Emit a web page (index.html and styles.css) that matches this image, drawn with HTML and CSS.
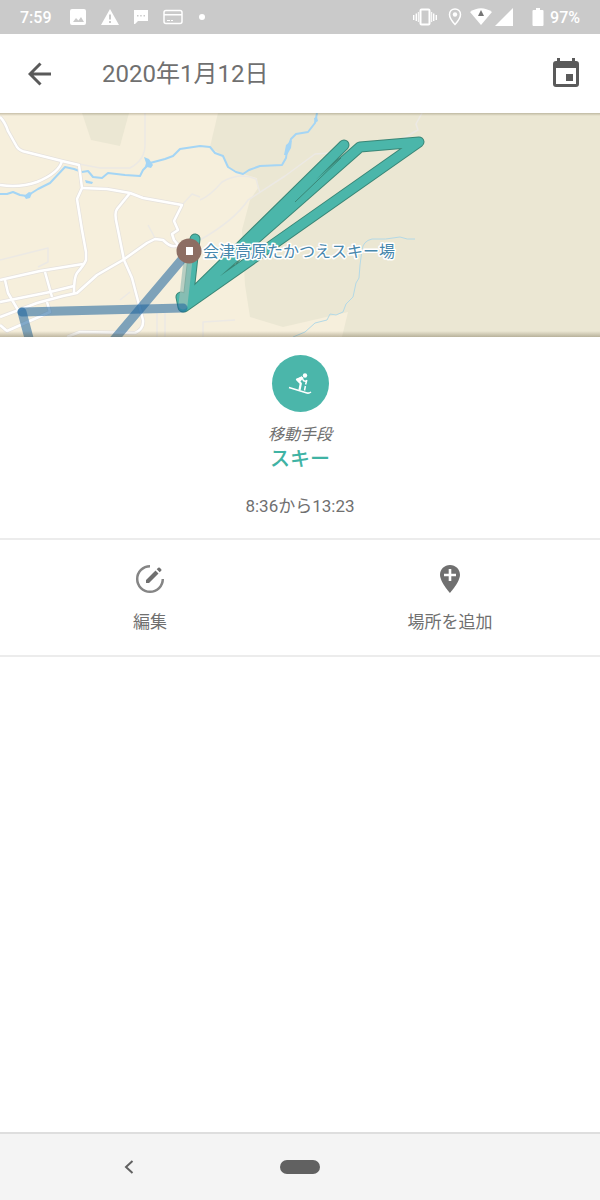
FILE: index.html
```html
<!DOCTYPE html>
<html lang="ja">

<head>
    <meta charset="UTF-8">
    <meta name="viewport" content="width=device-width, initial-scale=1.0">
    <title>2020年1月12日</title>
    <link rel="stylesheet" href="styles.css">
</head>

<body>
    <!-- Status Bar -->
    <div class="status-bar">
        <span class="clock">7:59</span>
        <div class="status-icons">
            <svg width="16" height="16" viewBox="0 0 16 16">
                <path fill-rule="evenodd" d="M2 0h12a2 2 0 0 1 2 2v12a2 2 0 0 1-2 2H2a2 2 0 0 1-2-2V2a2 2 0 0 1 2-2zM3 13h11l-3-5-2.500 3.500L6 9z" />
            </svg>
            <svg width="18" height="16" viewBox="0 0 18 16">
                <path fill-rule="evenodd" d="M9 0l9 16H0zM8 5.500v5h2v-5zM8 12v2h2v-2z" />
            </svg>
            <svg width="14" height="14" viewBox="0 0 14 14">
                <path fill-rule="evenodd" d="M0 0h14v11H4l-3 3H0zM3 5v1.500h1.500V5zM6.200 5v1.500h1.500V5zM9.500 5v1.500H11V5z" />
            </svg>
            <svg width="20" height="16" viewBox="0 0 20 16">
                <rect x="1" y="1.500" width="18" height="13" rx="2" class="line" />
                <path d="M1 5h18v1.500H1zM4 11h3v1H4zM8 11h2v1H8z" />
            </svg>
            <svg width="8" height="8" viewBox="0 0 8 8">
                <circle cx="4" cy="4" r="3" />
            </svg>
        </div>
        <div class="status-icons status-right">
            <svg width="24" height="18" viewBox="0 0 24 18">
                <rect x="7.500" y="1.500" width="9" height="15" rx="1" class="line thick" />
                <path d="M0 7h1.400v5H0zM2.600 5.500H4v7.500H2.600zM4.800 4h1v10h-1zM18.200 4h1v10h-1zM20 5.500h1.400v7.500H20zM22.600 7H24v5h-1.400z" />
            </svg>
            <svg width="14" height="18" viewBox="0 0 14 18">
                <path d="M7 1C3.800 1 1.500 3.400 1.500 6.500 1.500 10.500 7 16.500 7 16.500s5.500-6 5.500-10C12.500 3.400 10.200 1 7 1z" class="line" />
                <circle cx="7" cy="6.500" r="2.200" />
            </svg>
            <div class="signal">
                <svg width="24" height="18" viewBox="0 0 24 18">
                    <path d="M1 4q11-7.500 22 0L12 17z" />
                    <path d="M12 2l3 6H9z" class="wifi-mark" />
                </svg>
                <svg width="18" height="18" viewBox="0 0 18 18">
                    <path d="M18 0v18H0z" />
                </svg>
            </div>
            <div class="battery">
                <svg width="12" height="18" viewBox="0 0 12 18">
                    <path d="M4 0h4v2h2.500q1 0 1 1v14q0 1-1 1h-9q-1 0-1-1V3q0-1 1-1H4z" />
                </svg>
                <span>97%</span>
            </div>
        </div>
    </div>

    <!-- Header -->
    <header class="header">
        <button class="icon-btn" aria-label="戻る">
            <svg width="24" height="24" viewBox="0 0 24 24">
                <path d="M23 12H2M12.500 1.500L2 12l10.500 10.500" class="arrow" />
            </svg>
        </button>
        <h1>2020年1月12日</h1>
        <button class="icon-btn" aria-label="カレンダー">
            <svg width="26" height="32" viewBox="0 0 26 32">
                <path fill-rule="evenodd" d="M4 0h3v3h12V0h3v3h1q3 0 3 3v20q0 3-3 3H3q-3 0-3-3V6q0-3 3-3h1zM3 10v16h20V10zM13 16h7v7h-7z" />
            </svg>
        </button>
    </header>

    <!-- Map -->
    <div class="map">
        <svg viewBox="0 113 600 224" preserveAspectRatio="xMidYMid slice">
            <path class="forest" d="M218 113L210 147L223 156L228 167L243 174L257 178L258 188L250 200L242 230L245 285L250 317L283 327L348 312L342 337H600V113z" />
            <path class="forest" d="M82 113L91 140L120 146L129 113z" />

            <!-- Small tracks -->
            <g class="track">
                <path d="M79 164L100 168L130 168Q145 160 145 145V113" />
                <path d="M200 200Q210 196 222 182Q240 172 256 179L260 193M200 240Q235 220 248 200L285 176L315 154L345 152" />
                <path d="M400 140L418 130L416 124L422 113" />
                <path d="M0 260L48 248V262L38 267M182 205L192 194L200 197M148 225L155 238M203 337V322L235 320M120 300L130 292M157 337V313M165 337V313" />
            </g>

            <!-- Rivers -->
            <path class="river" d="M0 194L7 194L13 192L20 195L27 196L38 189L50 183L65 167L74 169L82 172L88 171L93 177L102 178L108 173L125 175L140 176L143 170L150 163L165 159L173 156L180 149L200 146L210 147L215 153L223 156L228 167L236 172L243 174L249 170L260 166L282 165L286 158L287 150L291 139L296 134L308 132L315 123L317 113" />
            <path class="water" d="M24 196l5-4 3 1-2 5-4 1zM144 157l5 2 4 6-2 3-4-1-3 3 2-7zM85 180l8 2-1 2-6-1zM284 155l2-10 6-5-1 8-4 7zM314 118l3-1 1 4-3 2z" />
            <path class="river thin" d="M415 239Q407 240 400 237Q385 240 372 239Q363 241 362 250L360 265L359 278L356 283L353 297L346 304L343 312L336 315L330 314L327 320L315 323L305 332L293 337" />

            <!-- Roads -->
            <g class="road-edge">
                <path d="M0 117Q5 122 8 131L17 147Q20 151 26 152L62 161L79 165L82 188L77 199L82 230L86 252V260Q84 265 77 273Q74 277 74 293" />
                <path d="M62 161Q59 173 37 182Q20 188 0 185" />
                <path d="M82 188L107 189L130 193L143 198L182 205L174 221L178 230L172 234L174 240L178 245Q172 249 163 240L155 239L147 243L123 260L97 275L77 293L63 296L37 303L0 317" />
                <path d="M130 193L117 209Q114 213 117 225L124 260L132 278L143 320Q144 329 135 333L80 332L67 337" />
                <path d="M0 280L40 271L83 264M0 302L50 292L74 286M45 272L52 297M5 280L8 293L18 310M47 302L50 312L7 331L0 325" />
            </g>
            <g class="road">
                <path d="M0 117Q5 122 8 131L17 147Q20 151 26 152L62 161L79 165L82 188L77 199L82 230L86 252V260Q84 265 77 273Q74 277 74 293" />
                <path d="M62 161Q59 173 37 182Q20 188 0 185" />
                <path d="M82 188L107 189L130 193L143 198L182 205L174 221L178 230L172 234L174 240L178 245Q172 249 163 240L155 239L147 243L123 260L97 275L77 293L63 296L37 303L0 317" />
                <path d="M130 193L117 209Q114 213 117 225L124 260L132 278L143 320Q144 329 135 333L80 332L67 337" />
                <path d="M0 280L40 271L83 264M0 302L50 292L74 286M45 272L52 297M5 280L8 293L18 310M47 302L50 312L7 331L0 325" />
            </g>

            <!-- Ski route -->
            <path class="ski-edge" d="M195 239L188 301L181 297L183 307L344 145L186 300L360 147L419 142L184 307" />
            <path class="ski" d="M195 239L188 301L181 297L183 307L344 145L186 300L360 147L419 142L184 307" />
            <path class="ski-seam" d="M295 202L341 158M236 264L250 249" />

            <!-- Other moves of the day -->
            <path class="move light" d="M189 251L183 305" />
            <path class="move" d="M189 251L112 342" />
            <path class="move" d="M183 308L22 312" />
            <path class="move" d="M22 312L30 342" />

            <circle cx="189" cy="251" r="12.500" class="pin" />
            <rect x="186" y="247" width="7" height="8" class="pin-dot" />
            <text x="203" y="257" class="place">会津高原たかつえスキー場</text>
        </svg>
    </div>

    <!-- Activity -->
    <main>
        <section class="activity">
            <div class="activity-icon">
                <svg width="24" height="24" viewBox="0 0 24 24">
                    <circle cx="17" cy="3.500" r="2.200" />
                    <path d="M14 5.500L9 7.500L12.800 11.500L11.500 18" class="body" />
                    <path d="M9 7.200L13.500 4.200L15.500 6L12 10z" />
                    <path d="M14 5.500L15.500 8.800L19 9.500" class="arm" />
                    <path d="M1 15.500L19 21Q21 21.500 23 20M18.800 8L17.600 12.500M17.400 14L16.500 18.500" class="skis" />
                </svg>
            </div>
            <p class="mode-label">移動手段</p>
            <p class="mode">スキー</p>
            <p class="time">8:36から13:23</p>
        </section>

        <div class="actions">
            <button class="action">
                <svg width="30" height="30" viewBox="0 0 30 30">
                    <path d="M15 2.200A12.800 12.800 0 1 0 27.800 15" class="ring" />
                    <path d="M11 16L20.500 6.500L23.500 9.500L14 19H11zM21.700 5.300l1.500-1.500q.8-.8 1.600 0l1.400 1.400q.8.800 0 1.600l-1.500 1.500z" />
                </svg>
                <span>編集</span>
            </button>
            <button class="action">
                <svg width="30" height="30" viewBox="0 0 30 30">
                    <path fill-rule="evenodd" d="M15 1C9.400 1 5 5.300 5 10.800 5 18 15 29 15 29s10-11 10-18.200C25 5.300 20.600 1 15 1zM13.700 5h2.600v4.700H21v2.600h-4.700V17h-2.600v-4.700H9V9.700h4.700z" />
                </svg>
                <span>場所を追加</span>
            </button>
        </div>
    </main>

    <!-- Navigation Bar -->
    <nav class="nav-bar">
        <button class="nav-btn" aria-label="戻る">
            <svg width="10" height="14" viewBox="0 0 10 14">
                <path d="M8.500 1L2 7l6.500 6" class="chevron" />
            </svg>
        </button>
        <button class="nav-btn" aria-label="ホーム"><span class="pill"></span></button>
    </nav>
</body>

</html>
```

FILE: styles.css
```css
/* General Styles */
* {
    box-sizing: border-box;
}

body {
    margin: 0;
    min-height: 100vh;
    display: flex;
    flex-direction: column;
    font-family: Roboto, 'Noto Sans CJK JP', sans-serif;
    background: #fff;
    color: #707070;
}

button {
    padding: 0;
    border: none;
    background: none;
    font: inherit;
    color: inherit;
    cursor: pointer;
}

svg {
    display: block;
    fill: currentColor;
}

h1,
p {
    margin: 0;
    font-weight: 400;
}

/* Status Bar */
.status-bar {
    display: flex;
    align-items: center;
    height: 34px;
    padding: 0 20px;
    background: #cacaca;
    color: #fff;
    font-size: 16px;
    font-weight: 500;
}

.status-icons {
    display: flex;
    align-items: center;
    gap: 15px;
    margin-left: 18px;
}

.status-right {
    gap: 11px;
    margin-left: auto;
}

.signal {
    display: flex;
    gap: 2px;
    margin-left: -4px;
}

.battery {
    display: flex;
    align-items: center;
    gap: 6px;
    margin-left: 8px;
}

.line {
    fill: none;
    stroke: currentColor;
    stroke-width: 1.5;
}

.thick {
    stroke-width: 2;
}

.wifi-mark {
    fill: #757575;
}

/* Header */
.header {
    display: flex;
    align-items: center;
    height: 79px;
    padding: 0 21px 0 28px;
}

.header h1 {
    flex: 1;
    margin-left: 50px;
    font-size: 24px;
    line-height: 32px;
}

.icon-btn {
    color: #5a5a5a;
}

.arrow {
    fill: none;
    stroke: currentColor;
    stroke-width: 3;
}

/* Map */
.map {
    position: relative;
    height: 224px;
    background: #f6efdc;
}

.map svg {
    width: 100%;
    height: 100%;
}

/* Inner shadows along the top and bottom edges */
.map::after {
    content: "";
    position: absolute;
    inset: 0;
    pointer-events: none;
    background:
        linear-gradient(rgba(90, 80, 50, 0.3), transparent) top / 100% 3px no-repeat,
        linear-gradient(transparent, rgba(90, 80, 50, 0.35)) bottom / 100% 6px no-repeat;
}

.forest {
    fill: #ebe7d3;
}

.track,
.river,
.road,
.road-edge {
    fill: none;
    stroke-linejoin: round;
}

.track {
    stroke: #ece9e4;
    stroke-width: 1.5;
}

.river {
    stroke: #a4d5f5;
    stroke-width: 2;
}

.river.thin {
    stroke: #b4d9e6;
    stroke-width: 1;
}

.water {
    fill: #a4d5f5;
}

.road-edge {
    stroke: #e6e2dd;
    stroke-width: 4;
}

.road {
    stroke: #fff;
    stroke-width: 2.5;
}

.ski,
.ski-edge {
    fill: none;
    stroke-linecap: round;
    stroke-linejoin: round;
}

.ski-edge {
    stroke: #3a8676;
    stroke-width: 11;
}

.ski {
    stroke: #4bb6aa;
    stroke-width: 9;
}

.ski-seam {
    stroke: #3a8676;
    stroke-width: 1;
}

.move {
    fill: none;
    stroke: #1c629c;
    stroke-opacity: 0.55;
    stroke-width: 9;
    stroke-linecap: round;
}

.move.light {
    stroke: #a0c0b6;
    stroke-opacity: 0.7;
}

.pin {
    fill: #8d6e63;
}

.pin-dot {
    fill: #fff;
}

.place {
    fill: #4787ad;
    stroke: #fff;
    stroke-width: 3;
    stroke-linejoin: round;
    paint-order: stroke;
    font-size: 16px;
}

/* Activity */
main {
    flex: 1;
}

.activity {
    display: flex;
    flex-direction: column;
    align-items: center;
    padding: 18px 0 20px;
    border-bottom: 2px solid #ececec;
}

.activity-icon {
    display: flex;
    align-items: center;
    justify-content: center;
    width: 57px;
    height: 57px;
    border-radius: 50%;
    background: #4bb6aa;
    color: #fff;
}

.body,
.arm,
.skis {
    fill: none;
    stroke: currentColor;
    stroke-width: 2.2;
    stroke-linejoin: round;
}

.arm,
.skis {
    stroke-width: 1.5;
}

.mode-label {
    margin-top: 11px;
    font-size: 16px;
    line-height: 24px;
    font-style: italic;
}

.mode {
    font-size: 20px;
    line-height: 24px;
    font-weight: 500;
    color: #3fb3a4;
}

.time {
    margin-top: 23px;
    font-size: 17px;
    line-height: 24px;
}

/* Actions */
.actions {
    display: flex;
    border-bottom: 2px solid #ececec;
}

.action {
    flex: 1;
    display: flex;
    flex-direction: column;
    align-items: center;
    gap: 16px;
    padding: 24px 0 21px;
    font-size: 17px;
    line-height: 24px;
}

.ring {
    fill: none;
    stroke: #858585;
    stroke-width: 2.5;
}

/* Navigation Bar */
.nav-bar {
    display: grid;
    grid-template-columns: repeat(3, 1fr);
    height: 68px;
    padding: 0 44px;
    border-top: 2px solid #dedede;
    background: #f4f4f4;
}

.nav-btn {
    display: flex;
    align-items: center;
    justify-content: center;
    color: #616161;
}

.chevron {
    fill: none;
    stroke: currentColor;
    stroke-width: 2;
}

.pill {
    width: 40px;
    height: 14px;
    border-radius: 7px;
    background: #616161;
}
```
